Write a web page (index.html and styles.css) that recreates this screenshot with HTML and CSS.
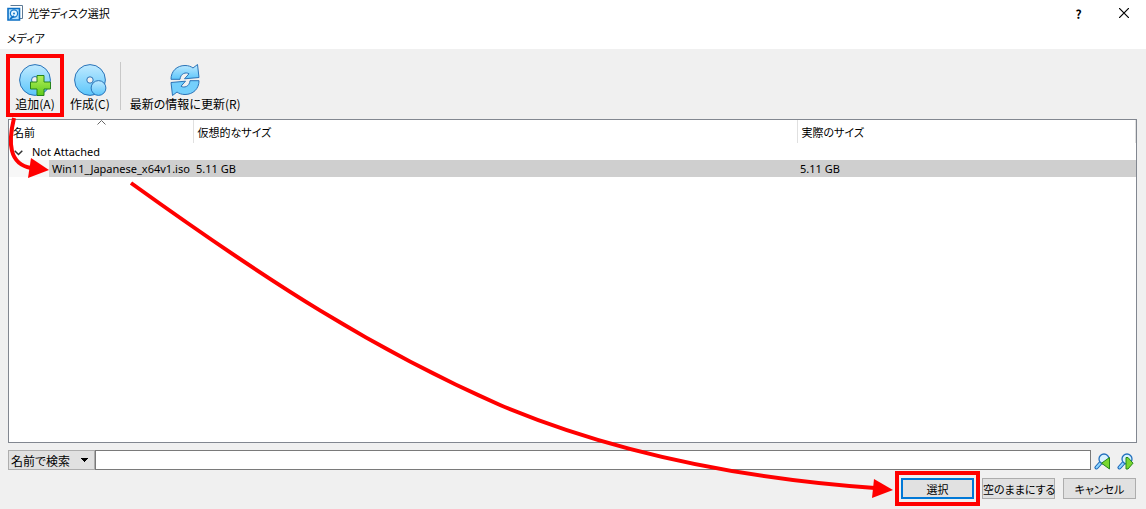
FILE: index.html
```html
<!DOCTYPE html>
<html lang="ja">
<head>
    <meta charset="UTF-8">
    <meta name="viewport" content="width=device-width, initial-scale=1.0">
    <title>光学ディスク選択</title>
    <link rel="stylesheet" href="styles.css">
</head>
<body>
    <div class="window">
        <header class="title-bar">
            <svg class="app-icon" width="16" height="16" viewBox="0 0 16 16">
                <path d="M3.5 .5h12v13h-3" fill="#fff" stroke="#5d7a96"/>
                <path d="M1 3.5h11.5v11.5h-11.5z" fill="#b5e2ff" stroke="#0d6fc4" stroke-width="1.6"/>
                <circle cx="7" cy="8.5" r="3.6" fill="#e4f6ff" stroke="#1579cc" stroke-width="1.2"/>
                <circle cx="7" cy="8.5" r="1" fill="#1579cc"/>
                <path d="M3 14l4-3" stroke="#0d6fc4" stroke-width="1.6"/>
            </svg>
            <h1>光学ディスク選択</h1>
            <button class="title-button" type="button" aria-label="ヘルプ">?</button>
            <button class="title-button" type="button" aria-label="閉じる">
                <svg width="10" height="10" viewBox="0 0 10 10"><path d="M0 0L10 10M10 0L0 10" stroke="#000" stroke-width="1.2"/></svg>
            </button>
        </header>

        <nav class="menu-bar">
            <button type="button">メディア</button>
        </nav>

        <div class="toolbar">
            <button class="tool marked" type="button">
                <svg width="34" height="34" viewBox="0 0 34 34">
                    <defs>
                        <linearGradient id="blue" x1="0" y1="0" x2="0" y2="1">
                            <stop offset="0" stop-color="#c0eaff"/>
                            <stop offset="1" stop-color="#5cc6fb"/>
                        </linearGradient>
                        <linearGradient id="green" x1="0" y1="0" x2="0" y2="1">
                            <stop offset="0" stop-color="#b4f05a"/>
                            <stop offset="1" stop-color="#5fca1c"/>
                        </linearGradient>
                    </defs>
                    <circle cx="17" cy="17" r="15.4" fill="url(#blue)" stroke="#2a73b8"/>
                    <circle cx="17" cy="17" r="3.5" fill="#f0f0f0" stroke="#2a73b8"/>
                    <path d="M19 12.5h7v6.5h6.5v7h-6.5v6.5h-7v-6.5h-6.5v-7h6.5z" fill="url(#green)" stroke="#26851c"/>
                </svg>
                <span>追加(A)</span>
            </button>
            <button class="tool" type="button">
                <svg width="34" height="34" viewBox="0 0 34 34">
                    <circle cx="17" cy="17" r="15.4" fill="url(#blue)" stroke="#2a73b8"/>
                    <circle cx="17" cy="17" r="3.2" fill="#f0f0f0" stroke="#2a73b8"/>
                    <circle cx="25.5" cy="25" r="7.4" fill="url(#blue)" stroke="#2a73b8"/>
                </svg>
                <span>作成(C)</span>
            </button>
            <div class="separator"></div>
            <button class="tool" type="button">
                <svg width="34" height="34" viewBox="0 0 34 34">
                    <path d="M3 16.3C3 8 9 2.500 17 2.500c3.500 0 6 1 8 2.500l4.500-3.500 1.500 13-14.500 1.300 4.500-5c-3-2-8.500-.5-9 5.500z" fill="url(#blue)" stroke="#2a73b8" stroke-linejoin="round"/>
                    <path d="M31 17.700C31 26 25 31.500 17 31.500c-3.500 0-6-1-8-2.500l-4.500 3.500-1.500-13 14.500-1.300-4.500 5c3 2 8.500 .5 9-5.500z" fill="#74cffc" stroke="#2a73b8" stroke-linejoin="round"/>
                </svg>
                <span>最新の情報に更新(R)</span>
            </button>
        </div>

        <main class="media-list">
            <table>
                <colgroup>
                    <col class="col-name">
                    <col class="col-virtual">
                    <col class="col-actual">
                </colgroup>
                <thead>
                    <tr>
                        <th scope="col">名前
                            <svg class="sort-mark" width="9" height="5" viewBox="0 0 9 5"><path d="M.5 4.5l4-4 4 4" fill="none" stroke="#666"/></svg>
                        </th>
                        <th scope="col">仮想的なサイズ</th>
                        <th scope="col">実際のサイズ</th>
                    </tr>
                </thead>
                <tbody>
                    <tr class="group">
                        <td colspan="3">
                            <svg width="9" height="6" viewBox="0 0 9 6"><path d="M.7 .7l3.8 3.8 3.8-3.8" fill="none" stroke="#333" stroke-width="1.5"/></svg>
                            <span>Not Attached</span>
                        </td>
                    </tr>
                    <tr class="item">
                        <td class="item-name">Win11_Japanese_x64v1.iso</td>
                        <td>5.11 GB</td>
                        <td>5.11 GB</td>
                    </tr>
                </tbody>
            </table>
        </main>

        <form class="search-row">
            <select aria-label="検索方法">
                <option>名前で検索</option>
            </select>
            <input type="text" aria-label="検索">
            <button class="find" type="button" aria-label="前を検索">
                <svg width="17" height="17" viewBox="0 0 17 17">
                    <path d="M2.5 14.5l4-4.5" stroke="#1763b5" stroke-width="4" stroke-linecap="round"/>
                    <path d="M2.5 14.5l4-4.5" stroke="#8cd4ff" stroke-width="2" stroke-linecap="round"/>
                    <circle cx="10" cy="6" r="5" fill="#d8f2ff" stroke="#2371bd" stroke-width="1.3"/>
                    <path d="M15.5 4.5v11.5L7.5 10.2z" fill="#79d82f" stroke="#26851c" stroke-linejoin="round"/>
                </svg>
            </button>
            <button class="find" type="button" aria-label="次を検索">
                <svg width="17" height="17" viewBox="0 0 17 17">
                    <path d="M2.5 14.5l4-4.5" stroke="#1763b5" stroke-width="4" stroke-linecap="round"/>
                    <path d="M2.5 14.5l4-4.5" stroke="#8cd4ff" stroke-width="2" stroke-linecap="round"/>
                    <circle cx="10" cy="6" r="5" fill="#d8f2ff" stroke="#2371bd" stroke-width="1.3"/>
                    <path d="M9 4.5v11.5h2l5-5.8-5-5.700z" fill="#79d82f" stroke="#26851c" stroke-linejoin="round"/>
                </svg>
            </button>
        </form>

        <footer class="actions">
            <button class="primary marked" type="button">選択</button>
            <button type="button">空のままにする</button>
            <button type="button">キャンセル</button>
        </footer>

        <!-- 操作手順の矢印 -->
        <svg class="arrows" viewBox="0 0 1146 509" preserveAspectRatio="none">
            <path class="line" d="M14 118C8 143 9 164 31 168"/>
            <path class="head" d="M31 158l18 12-21 8z"/>
            <path class="line" d="M131 183C270 283 375 350 500 405C600 447 720 477 875 488"/>
            <path class="head" d="M874 479l19 11-21 8z"/>
        </svg>
    </div>
</body>
</html>
```

FILE: styles.css
```css
* {
    box-sizing: border-box;
}

body {
    margin: 0;
    background: #f0f0f0;
    color: #000;
    font-family: "Noto Sans", "Noto Sans CJK JP", sans-serif;
    font-size: 11px;
}

button,
select,
input {
    margin: 0;
    padding: 0;
    color: inherit;
    font-family: "Noto Sans CJK JP", sans-serif;
    font-size: 11px;
    font-feature-settings: "palt";
}

button {
    border: 0;
    background: none;
    white-space: nowrap;
}

.window {
    position: relative;
    display: flex;
    flex-direction: column;
    min-height: 100vh;
    padding-bottom: 10px;
}

.title-bar {
    display: flex;
    align-items: center;
    height: 26px;
    padding-left: 7px;
    background: #fff;
}

.title-bar h1 {
    flex: 1;
    margin: 0 0 0 5px;
    font-family: "Noto Sans CJK JP", sans-serif;
    font-size: 11px;
    font-weight: normal;
    font-feature-settings: "palt";
}

.title-button {
    display: flex;
    align-items: center;
    justify-content: center;
    width: 45px;
    height: 26px;
    font-size: 12px;
    font-weight: bold;
}

.menu-bar {
    height: 23px;
    padding-left: 7px;
    background: #fff;
}

.menu-bar button {
    height: 23px;
}

.toolbar {
    display: flex;
    align-items: flex-start;
    height: 70px;
    padding: 5px 6px 0;
}

.tool {
    display: flex;
    flex-direction: column;
    align-items: center;
    height: 63px;
    padding: 9px 6px 0;
    font-size: 12px;
    line-height: 14px;
}

.tool.marked {
    width: 58px;
}

.tool svg {
    display: block;
}

.separator {
    width: 1px;
    height: 48px;
    margin: 8px 3px 0 4px;
    background: #c8c8c8;
}

.marked {
    position: relative;
}

.marked::after {
    content: "";
    position: absolute;
    inset: 0;
    border: 4px solid #f00;
}

.primary.marked::after {
    inset: -9px -8px;
}

.media-list {
    flex: 1;
    margin: 0 9px 0 8px;
    border: 1px solid #828790;
    background: #fff;
}

table {
    width: 100%;
    table-layout: fixed;
    border-collapse: collapse;
}

.col-name {
    width: 184px;
}

.col-virtual {
    width: 604px;
}

th {
    position: relative;
    height: 23px;
    padding: 0 4px;
    border-right: 1px solid #e0e0e0;
    font-family: "Noto Sans CJK JP", sans-serif;
    font-weight: normal;
    font-feature-settings: "palt";
    line-height: 22px;
    text-align: left;
}

.sort-mark {
    position: absolute;
    top: 0;
    left: 50%;
    margin-left: -4px;
}

td {
    height: 17px;
    padding: 0 3px;
    line-height: 17px;
    white-space: nowrap;
}

.group td {
    padding-left: 5px;
}

.group span {
    margin-left: 6px;
}

.item td {
    background: #cfcfcf;
}

.item .item-name {
    padding: 0 0 0 43px;
    background: linear-gradient(to right, #f7f7f7 40px, #cfcfcf 40px);
}

.search-row {
    display: flex;
    margin: 7px 9px 0 8px;
}

.search-row select {
    width: 87px;
    height: 20px;
    padding: 0 2px;
    border: 1px solid #adadad;
    border-radius: 0;
    appearance: none;
    font-size: 12px;
    background:
        linear-gradient(to bottom left, #000 50%, transparent 50%) no-repeat 72px 7px / 4px 4px,
        linear-gradient(to bottom right, #000 50%, transparent 50%) no-repeat 76px 7px / 4px 4px,
        #e1e1e1;
}

.search-row input {
    flex: 1;
    min-width: 0;
    height: 20px;
    padding: 0 4px;
    border: 1px solid #7a7a7a;
    background: #fff;
}

.find {
    width: 23px;
    height: 20px;
}

.find svg {
    display: block;
    margin: 2px auto 0;
}

.actions {
    display: flex;
    justify-content: flex-end;
    gap: 8px;
    margin: 8px 10px 0 8px;
}

.actions button {
    width: 73px;
    height: 21px;
    border: 1px solid #adadad;
    background: #e1e1e1;
}

.actions .primary {
    border: 2px solid #0078d7;
}

.arrows {
    position: absolute;
    top: 0;
    left: 0;
    width: 100%;
    height: 100%;
    pointer-events: none;
}

.arrows .line {
    fill: none;
    stroke: #f00;
    stroke-width: 4;
}

.arrows .head {
    fill: #f00;
}
```
